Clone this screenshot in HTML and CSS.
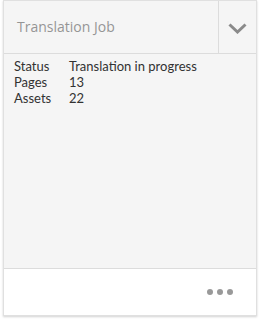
FILE: index.html
```html
<!DOCTYPE html>
<html lang="en">
<head>
    <meta charset="UTF-8">
    <title>Translation Job</title>
    <link rel="stylesheet" href="styles.css">
</head>
<body>
    <div class="card">
        <div class="card-header">
            <div class="card-title">Translation Job</div>
            <button class="toggle">
                <svg width="19" height="11" viewBox="0 0 19 11"><path d="M1.5 1.5 L9.5 9 L17.5 1.5" fill="none" stroke="#8a8a8a" stroke-width="3"/></svg>
            </button>
        </div>
        <div class="card-body">
            <table class="info">
                <tr><td>Status</td><td>Translation in progress</td></tr>
                <tr><td>Pages</td><td>13</td></tr>
                <tr><td>Assets</td><td>22</td></tr>
            </table>
        </div>
        <div class="card-footer">
            <span class="dot"></span><span class="dot"></span><span class="dot"></span>
        </div>
    </div>
</body>
</html>
```

FILE: styles.css
```css
body {
    margin: 0;
    padding: 0 2px 3px 3px;
    background: #fff;
    font-family: "Open Sans", "Noto Sans", sans-serif;
}
.card {
    height: 316px;
    display: flex;
    flex-direction: column;
    background: #f5f5f5;
    border: 1px solid #e0e0e0;
    box-shadow: 0 1px 2px rgba(0, 0, 0, 0.18);
    box-sizing: border-box;
}
.card-header {
    display: flex;
    height: 52px;
    border-bottom: 1px solid #dcdcdc;
}
.card-title {
    flex: 1;
    padding-left: 13px;
    line-height: 52px;
    font-size: 14px;
    color: #959595;
}
.toggle {
    width: 38px;
    border: 0;
    border-left: 1px solid #dcdcdc;
    background: transparent;
    padding: 4px 0 0;
    margin: 0;
}
.card-body {
    flex: 1;
    padding: 4px 10px;
}
.info {
    border-collapse: collapse;
    font-family: Lato, "Open Sans", sans-serif;
    font-size: 13px;
    color: #323232;
}
.info td {
    padding: 0;
    line-height: 16px;
}
.info td:first-child {
    width: 55px;
}
.card-footer {
    height: 46px;
    background: #fff;
    border-top: 1px solid #dcdcdc;
    display: flex;
    justify-content: flex-end;
    align-items: center;
    gap: 4px;
    padding-right: 23px;
}
.dot {
    width: 6px;
    height: 6px;
    border-radius: 50%;
    background: #999;
}
```
